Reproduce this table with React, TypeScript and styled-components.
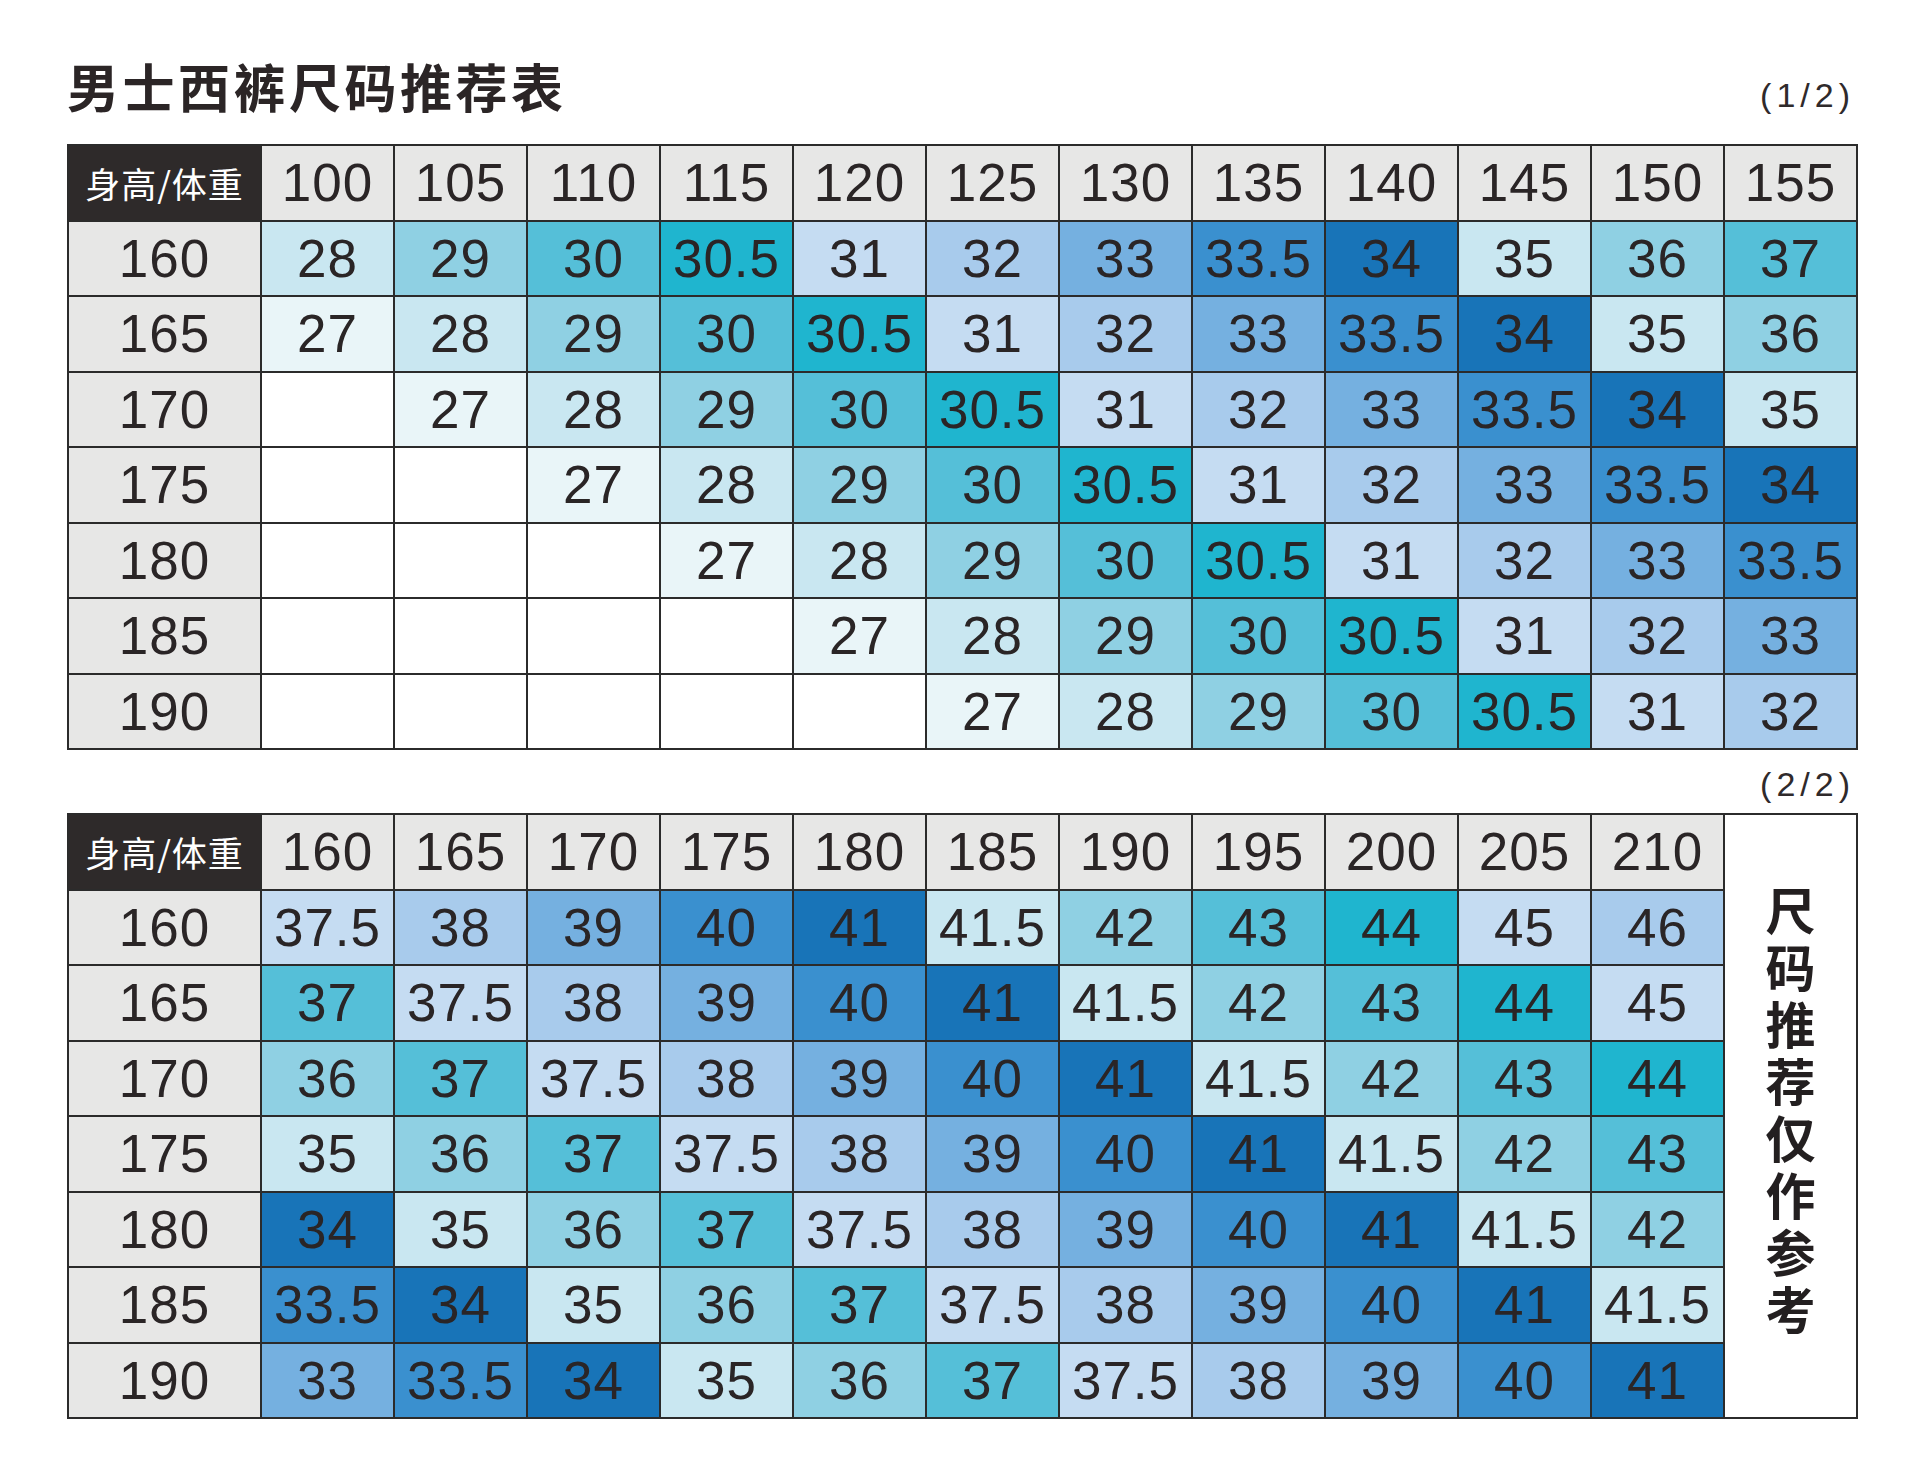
import React from 'react';
import styled, { createGlobalStyle } from 'styled-components';

const GlobalStyle = createGlobalStyle`
  html, body {
    margin: 0;
    padding: 0;
    background: #ffffff;
  }
  body {
    font-family: "Liberation Sans", Arial, sans-serif;
    color: #2a2526;
  }
`;

// colour per trouser size, repeating blue/teal ramp
const sizeColors: Record<string, string> = {
  '27': '#e9f5f8',
  '28': '#c9e7f1',
  '29': '#8fd0e3',
  '30': '#55bfd8',
  '30.5': '#1fb5cf',
  '31': '#c5dcf2',
  '32': '#a8cbec',
  '33': '#75b0e0',
  '33.5': '#3a90cf',
  '34': '#1874b8',
  '35': '#c9e7f1',
  '36': '#8fd0e3',
  '37': '#55bfd8',
  '37.5': '#c5dcf2',
  '38': '#a8cbec',
  '39': '#75b0e0',
  '40': '#3a90cf',
  '41': '#1874b8',
  '41.5': '#c9e7f1',
  '42': '#8fd0e3',
  '43': '#55bfd8',
  '44': '#1fb5cf',
  '45': '#c5dcf2',
  '46': '#a8cbec',
};

const heights = [160, 165, 170, 175, 180, 185, 190];
const weights1 = [100, 105, 110, 115, 120, 125, 130, 135, 140, 145, 150, 155];
const weights2 = [160, 165, 170, 175, 180, 185, 190, 195, 200, 205, 210];
const seq1 = ['27', '28', '29', '30', '30.5', '31', '32', '33', '33.5', '34', '35', '36', '37'];
const seq2 = ['33', '33.5', '34', '35', '36', '37', '37.5', '38', '39', '40', '41', '41.5', '42', '43', '44', '45', '46'];

const Page = styled.div`
  width: 1920px;
  min-height: 1469px;
  box-sizing: border-box;
  padding: 0 63px 0 67px;
`;

const TitleRow = styled.div`
  display: flex;
  justify-content: space-between;
  align-items: flex-end;
  padding-top: 60px;
  margin-bottom: 32px;
`;

const Title = styled.h1`
  margin: 0;
  font-family: "Noto Sans CJK SC", sans-serif;
  font-size: 52px;
  line-height: 52px;
  font-weight: 700;
  letter-spacing: 3.5px;
  color: #2b2526;
`;

const PageMark = styled.span`
  font-family: "Liberation Sans", Arial, sans-serif;
  font-size: 34px;
  line-height: 34px;
  letter-spacing: 5px;
  margin-right: 2px;
  color: #2f2a2b;
`;

const MarkRow = styled.div`
  display: flex;
  justify-content: flex-end;
  margin: 17px 0 12px;
`;

const Table = styled.table`
  width: 1790px;
  table-layout: fixed;
  border-collapse: collapse;
  border: 2px solid #2b2b2b;
`;

const Cell = styled.td<{ $bg?: string }>`
  height: 73.5px;
  padding: 0;
  border: 2px solid #2b2b2b;
  background: ${p => p.$bg || '#ffffff'};
  text-align: center;
  vertical-align: middle;
  font-family: "Liberation Sans", Arial, sans-serif;
  font-size: 53px;
  line-height: 1;
  letter-spacing: 1px;
  color: #2a2526;
  white-space: nowrap;
  overflow: hidden;
`;

const HeadCell = styled(Cell)`
  background: #e7e7e6;
`;

const CornerCell = styled(Cell)`
  background: #2e2a2a;
  color: #ffffff;
  font-family: "Noto Sans CJK SC", sans-serif;
  font-size: 35px;
  letter-spacing: 1px;
`;

const NoteCell = styled.td`
  padding: 0;
  border: 2px solid #2b2b2b;
  background: #ffffff;
  text-align: center;
  vertical-align: middle;
`;

const NoteText = styled.div`
  display: inline-block;
  writing-mode: vertical-rl;
  font-family: "Noto Sans CJK SC", sans-serif;
  font-size: 50px;
  font-weight: 700;
  letter-spacing: 7px;
  line-height: 1;
  color: #231f20;
`;

const Cols: React.FC<{ count: number }> = ({ count }) => (
  <colgroup>
    <col style={{ width: 193 }} />
    {Array.from({ length: count }).map((_, i) => (
      <col key={i} style={{ width: 133 }} />
    ))}
  </colgroup>
);

const SizeCell: React.FC<{ value?: string }> = ({ value }) => (
  <Cell $bg={value ? sizeColors[value] : '#ffffff'}>{value || ''}</Cell>
);

export default function App() {
  return (
    <Page>
      <GlobalStyle />
      <TitleRow>
        <Title>男士西裤尺码推荐表</Title>
        <PageMark>(1/2)</PageMark>
      </TitleRow>

      <Table>
        <Cols count={12} />
        <tbody>
          <tr>
            <CornerCell>身高/体重</CornerCell>
            {weights1.map(w => (
              <HeadCell key={w}>{w}</HeadCell>
            ))}
          </tr>
          {heights.map((h, i) => (
            <tr key={h}>
              <HeadCell>{h}</HeadCell>
              {weights1.map((w, j) => {
                const k = j - i + 1;
                return <SizeCell key={w} value={k >= 0 ? seq1[k] : undefined} />;
              })}
            </tr>
          ))}
        </tbody>
      </Table>

      <MarkRow>
        <PageMark>(2/2)</PageMark>
      </MarkRow>

      <Table>
        <Cols count={12} />
        <tbody>
          <tr>
            <CornerCell>身高/体重</CornerCell>
            {weights2.map(w => (
              <HeadCell key={w}>{w}</HeadCell>
            ))}
            <NoteCell rowSpan={8}>
              <NoteText>尺码推荐仅作参考</NoteText>
            </NoteCell>
          </tr>
          {heights.map((h, i) => (
            <tr key={h}>
              <HeadCell>{h}</HeadCell>
              {weights2.map((w, j) => (
                <SizeCell key={w} value={seq2[j - i + 6]} />
              ))}
            </tr>
          ))}
        </tbody>
      </Table>
    </Page>
  );
}
